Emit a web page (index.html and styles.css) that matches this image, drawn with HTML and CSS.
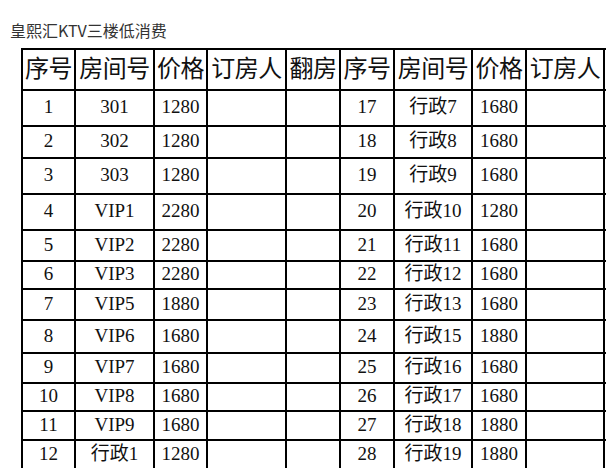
FILE: index.html
```html
<!DOCTYPE html>
<html lang="zh-CN">
<head>
<meta charset="utf-8">
<title>皇熙汇KTV三楼低消费</title>
<link rel="stylesheet" href="styles.css">
</head>
<body>
<div class="title">皇熙汇KTV三楼低消费</div>
<table class="sheet">
  <colgroup>
    <col class="c-n"><col class="c-r"><col class="c-p"><col class="c-b"><col class="c-f">
    <col class="c-n2"><col class="c-r2"><col class="c-p2"><col class="c-b2"><col class="c-f2">
  </colgroup>
  <thead>
    <tr class="head">
      <th>序号</th><th>房间号</th><th>价格</th><th>订房人</th><th>翻房</th>
      <th>序号</th><th>房间号</th><th>价格</th><th>订房人</th><th></th>
    </tr>
  </thead>
  <tbody>
    <tr><td>1</td><td>301</td><td>1280</td><td></td><td></td><td>17</td><td>行政7</td><td>1680</td><td></td><td></td></tr>
    <tr><td>2</td><td>302</td><td>1280</td><td></td><td></td><td>18</td><td>行政8</td><td>1680</td><td></td><td></td></tr>
    <tr><td>3</td><td>303</td><td>1280</td><td></td><td></td><td>19</td><td>行政9</td><td>1680</td><td></td><td></td></tr>
    <tr><td>4</td><td>VIP1</td><td>2280</td><td></td><td></td><td>20</td><td>行政10</td><td>1280</td><td></td><td></td></tr>
    <tr><td>5</td><td>VIP2</td><td>2280</td><td></td><td></td><td>21</td><td>行政11</td><td>1680</td><td></td><td></td></tr>
    <tr><td>6</td><td>VIP3</td><td>2280</td><td></td><td></td><td>22</td><td>行政12</td><td>1680</td><td></td><td></td></tr>
    <tr><td>7</td><td>VIP5</td><td>1880</td><td></td><td></td><td>23</td><td>行政13</td><td>1680</td><td></td><td></td></tr>
    <tr><td>8</td><td>VIP6</td><td>1680</td><td></td><td></td><td>24</td><td>行政15</td><td>1880</td><td></td><td></td></tr>
    <tr><td>9</td><td>VIP7</td><td>1680</td><td></td><td></td><td>25</td><td>行政16</td><td>1680</td><td></td><td></td></tr>
    <tr><td>10</td><td>VIP8</td><td>1680</td><td></td><td></td><td>26</td><td>行政17</td><td>1680</td><td></td><td></td></tr>
    <tr><td>11</td><td>VIP9</td><td>1680</td><td></td><td></td><td>27</td><td>行政18</td><td>1880</td><td></td><td></td></tr>
    <tr><td>12</td><td>行政1</td><td>1280</td><td></td><td></td><td>28</td><td>行政19</td><td>1880</td><td></td><td></td></tr>
  </tbody>
</table>
</body>
</html>
```
FILE: styles.css
```css
html, body {
  margin: 0;
  padding: 0;
  overflow: hidden;
  background: #ffffff;
}
body {
  padding: 19px 0 0 10px;
  width: 700px;
}
.title {
  font-family: "Noto Sans CJK SC", "Noto Sans", sans-serif;
  font-size: 16px;
  line-height: 22px;
  height: 22px;
  color: #333333;
}
.sheet {
  margin-top: 7px;
  margin-left: 11px;
  border-collapse: collapse;
  table-layout: fixed;
  width: 637px;
}
.c-n { width: 53px; }
.c-r { width: 79px; }
.c-p { width: 53px; }
.c-b { width: 79px; }
.c-f { width: 54px; }
.c-n2 { width: 54px; }
.c-r2 { width: 78px; }
.c-p2 { width: 54px; }
.c-b2 { width: 78px; }
.c-f2 { width: 55px; }
.sheet th,
.sheet td {
  border: 2px solid #000000;
  padding: 0;
  text-align: center;
  vertical-align: middle;
  color: #111111;
  white-space: nowrap;
  overflow: hidden;
}
.sheet th {
  font-family: "Noto Sans CJK SC", sans-serif;
  font-weight: 400;
  font-size: 24px;
  line-height: 28px;
  padding-bottom: 5px;
  letter-spacing: -0.5px;
}
.sheet td {
  font-family: "Liberation Serif", "Noto Sans CJK SC", serif;
  font-size: 19px;
  line-height: 20px;
  padding-bottom: 2px;
}
.head { height: 41px; }
tbody tr:nth-child(1) { height: 36px; }
tbody tr:nth-child(2) { height: 32px; }
tbody tr:nth-child(3) { height: 36px; }
tbody tr:nth-child(4) { height: 36px; }
tbody tr:nth-child(5) { height: 31px; }
tbody tr:nth-child(6) { height: 28px; }
tbody tr:nth-child(7) { height: 31px; }
tbody tr:nth-child(8) { height: 33px; }
tbody tr:nth-child(9) { height: 30px; }
tbody tr:nth-child(10) { height: 28px; }
tbody tr:nth-child(11) { height: 29px; }
tbody tr:nth-child(12) { height: 30px; }
```
